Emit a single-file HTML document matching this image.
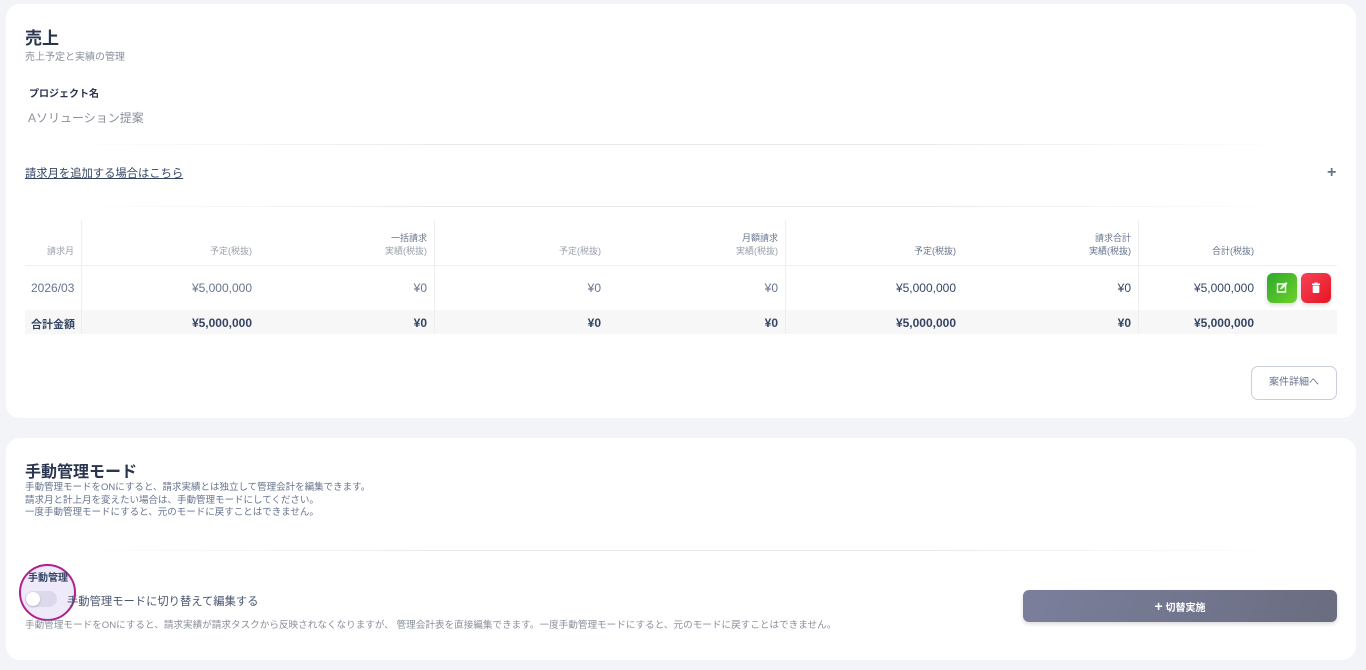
<!DOCTYPE html>
<html><head><meta charset="utf-8"><style>
*{box-sizing:border-box;margin:0;padding:0}
body{width:1366px;height:670px;background:#f3f4f7;font-family:"Liberation Sans","Noto Sans CJK JP",sans-serif;color:#344563;position:relative;overflow:hidden}
.card{position:absolute;left:6px;width:1350px;background:#fff;border-radius:14px}
.a{position:absolute;white-space:nowrap}
.hr{position:absolute;height:1px;background:linear-gradient(90deg,rgba(230,232,236,0),#e8eaee 30%,#e8eaee 70%,rgba(230,232,236,0))}
.vl{position:absolute;width:1px;background:#eceef1}
.r{text-align:right}
.hd{font-size:9px;color:#9a9fab}
.hd b{color:#67748e;font-weight:normal}
.c{font-size:12px;color:#67748e}
.t{font-size:12px;color:#344563;font-weight:600}
</style></head><body>
<div class="card" style="top:4px;height:414px"></div>
<div class="card" style="top:438px;height:222px"></div>

<div class="a" style="left:25px;top:24px;font-size:17px;font-weight:bold;color:#2a3550">売上</div>
<div class="a" style="left:25px;top:48px;font-size:10px;color:#8a8f9c">売上予定と実績の管理</div>
<div class="a" style="left:29px;top:85px;font-size:10px;font-weight:bold;color:#2a3550">プロジェクト名</div>
<div class="a" style="left:28px;top:109px;font-size:12px;color:#8a8f9c">Aソリューション提案</div>
<div class="hr" style="left:60px;width:1240px;top:144px"></div>
<div class="a" style="left:25px;top:165px;font-size:11.3px;color:#344563;text-decoration:underline">請求月を追加する場合はこちら</div>
<div class="a" style="left:1327px;top:164px;font-size:16px;font-weight:bold;color:#67748e">+</div>
<div class="hr" style="left:60px;width:1240px;top:206px"></div>

<div class="vl" style="left:81px;top:220px;height:114px"></div>
<div class="vl" style="left:434px;top:220px;height:114px"></div>
<div class="vl" style="left:785px;top:220px;height:114px"></div>
<div class="vl" style="left:1138px;top:220px;height:114px"></div>
<div style="position:absolute;left:25px;top:265px;width:1312px;height:1px;background:#eef0f2"></div>
<div style="position:absolute;left:25px;top:310px;width:1312px;height:24px;background:#f7f7f8"></div>
<div class="vl" style="left:81px;top:310px;height:24px;background:#ebedf0"></div>
<div class="vl" style="left:434px;top:310px;height:24px;background:#ebedf0"></div>
<div class="vl" style="left:785px;top:310px;height:24px;background:#ebedf0"></div>
<div class="vl" style="left:1138px;top:310px;height:24px;background:#ebedf0"></div>

<div class="a hd r" style="right:1292px;top:244px">請求月</div>
<div class="a hd r" style="right:1114px;top:244px">予定(税抜)</div>
<div class="a hd r" style="right:939px;top:231px"><b>一括請求</b></div>
<div class="a hd r" style="right:939px;top:244px">実績(税抜)</div>
<div class="a hd r" style="right:765px;top:244px">予定(税抜)</div>
<div class="a hd r" style="right:588px;top:231px"><b>月額請求</b></div>
<div class="a hd r" style="right:588px;top:244px">実績(税抜)</div>
<div class="a hd r" style="right:410px;top:244px"><b>予定(税抜)</b></div>
<div class="a hd r" style="right:235px;top:231px"><b>請求合計</b></div>
<div class="a hd r" style="right:235px;top:244px"><b>実績(税抜)</b></div>
<div class="a hd r" style="right:112px;top:244px"><b>合計(税抜)</b></div>

<div class="a c" style="left:31px;top:281px">2026/03</div>
<div class="a c r" style="right:1114px;top:281px">¥5,000,000</div>
<div class="a c r" style="right:939px;top:281px">¥0</div>
<div class="a c r" style="right:765px;top:281px">¥0</div>
<div class="a c r" style="right:588px;top:281px">¥0</div>
<div class="a c r" style="right:410px;top:281px;color:#344563">¥5,000,000</div>
<div class="a c r" style="right:235px;top:281px;color:#344563">¥0</div>
<div class="a c r" style="right:112px;top:281px;color:#344563">¥5,000,000</div>
<div class="a" style="left:1267px;top:273px;width:30px;height:30px;border-radius:6px;background:linear-gradient(135deg,#2ca82c,#6ed12a);box-shadow:0 2px 4px rgba(0,0,0,.15)">
<svg width="30" height="30" viewBox="0 0 30 30"><rect x="10.5" y="11" width="8" height="8" fill="none" stroke="#fff" stroke-width="1.4"/><path d="M13 16.5l1 -2.5 5-5 1.5 1.5-5 5z" fill="#fff"/></svg></div>
<div class="a" style="left:1301px;top:273px;width:30px;height:30px;border-radius:6px;background:linear-gradient(135deg,#f5445a,#e8141f);box-shadow:0 2px 4px rgba(0,0,0,.15)">
<svg width="30" height="30" viewBox="0 0 30 30"><rect x="11" y="10.5" width="8" height="1.5" fill="#fff"/><rect x="13.5" y="9.5" width="3" height="1.5" fill="#fff"/><rect x="11.7" y="12.5" width="6.6" height="7.5" rx="0.8" fill="#fff"/></svg></div>

<div class="a t" style="left:31px;top:316px;font-size:11px">合計金額</div>
<div class="a t r" style="right:1114px;top:316px">¥5,000,000</div>
<div class="a t r" style="right:939px;top:316px">¥0</div>
<div class="a t r" style="right:765px;top:316px">¥0</div>
<div class="a t r" style="right:588px;top:316px">¥0</div>
<div class="a t r" style="right:410px;top:316px">¥5,000,000</div>
<div class="a t r" style="right:235px;top:316px">¥0</div>
<div class="a t r" style="right:112px;top:316px">¥5,000,000</div>

<div class="a" style="left:1251px;top:366px;width:86px;height:34px;border:1px solid #c9cfda;border-radius:7px;font-size:10px;color:#67748e;text-align:center;line-height:32px">案件詳細へ</div>

<div class="a" style="left:25px;top:458px;font-size:16px;font-weight:bold;color:#2a3550">手動管理モード</div>
<div class="a" style="left:25px;top:482px;font-size:9.5px;color:#67748e;line-height:12.5px">手動管理モードをONにすると、請求実績とは独立して管理会計を編集できます。<br>請求月と計上月を変えたい場合は、手動管理モードにしてください。<br>一度手動管理モードにすると、元のモードに戻すことはできません。</div>
<div class="hr" style="left:60px;width:1240px;top:550px"></div>
<div class="a" style="left:19px;top:564px;width:57px;height:57px;border-radius:50%;border:2.5px solid #b0208f;background:rgba(210,195,240,.35)"></div>
<div class="a" style="left:28px;top:569px;font-size:10px;font-weight:bold;color:#344563">手動管理</div>
<div class="a" style="left:25px;top:591px;width:32px;height:16px;border-radius:8px;background:#dcd9ec"></div>
<div class="a" style="left:26px;top:592px;width:14px;height:14px;border-radius:50%;background:#fff;box-shadow:0 1px 2px rgba(0,0,0,.2)"></div>
<div class="a" style="left:67px;top:593px;font-size:11.3px;color:#4a5570">手動管理モードに切り替えて編集する</div>
<div class="a" style="left:25px;top:617px;font-size:9.6px;color:#8a8f9c">手動管理モードをONにすると、請求実績が請求タスクから反映されなくなりますが、 管理会計表を直接編集できます。一度手動管理モードにすると、元のモードに戻すことはできません。</div>
<div class="a" style="left:1023px;top:590px;width:314px;height:32px;border-radius:6px;background:linear-gradient(110deg,#7b7f9c,#6a6d80);box-shadow:0 2px 4px rgba(0,0,0,.15);color:#fff;font-size:10px;font-weight:bold;text-align:center;line-height:32px"><span style="font-size:14px">+</span> 切替実施</div>
</body></html>
